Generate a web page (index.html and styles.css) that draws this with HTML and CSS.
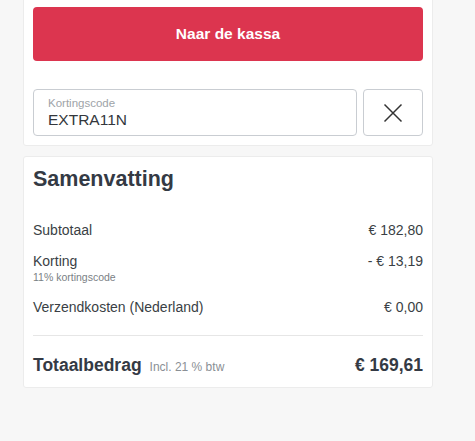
FILE: index.html
```html
<!DOCTYPE html>
<html lang="nl">
<head>
<meta charset="utf-8">
<title>Winkelwagen</title>
<link rel="stylesheet" href="styles.css">
</head>
<body>
<div class="wrap">
  <section class="card card-top">
    <button class="checkout">Naar de kassa</button>
    <div class="coupon">
      <div class="field">
        <span class="field-label">Kortingscode</span>
        <span class="field-value">EXTRA11N</span>
      </div>
      <button class="clear" aria-label="Verwijderen">
        <svg width="20" height="20" viewBox="0 0 20 20"><path d="M1.5 1.5 L18.5 18.5 M18.5 1.5 L1.5 18.5" stroke="#333" stroke-width="1.5" fill="none"/></svg>
      </button>
    </div>
  </section>
  <section class="card card-summary">
    <h2 class="title">Samenvatting</h2>
    <div class="row row-first">
      <span>Subtotaal</span>
      <span>€ 182,80</span>
    </div>
    <div class="row row-discount">
      <div>
        <div>Korting</div>
        <div class="sub">11% kortingscode</div>
      </div>
      <span>- € 13,19</span>
    </div>
    <div class="row row-ship">
      <span>Verzendkosten (Nederland)</span>
      <span>€ 0,00</span>
    </div>
    <div class="total">
      <div class="total-left">
        <span class="total-label">Totaalbedrag</span>
        <span class="vat">Incl. 21 % btw</span>
      </div>
      <span class="total-value">€ 169,61</span>
    </div>
  </section>
</div>
</body>
</html>
```
FILE: styles.css
```css
* { box-sizing: border-box; }
html, body { margin: 0; padding: 0; }
body {
  background: #f7f7f7;
  font-family: "Liberation Sans", Arial, sans-serif;
  color: #343a40;
  width: 475px;
  height: 441px;
  overflow: hidden;
}
.wrap {
  width: 410px;
  margin-left: 23px;
}
.card {
  background: #fff;
  border: 1px solid #ececec;
  border-radius: 3px;
}
.card-top {
  margin-top: -4px;
  padding: 10px 9px 9px;
}
.checkout {
  display: block;
  width: 100%;
  height: 54px;
  border: 0;
  border-radius: 4px;
  background: #dc354f;
  color: #fff;
  font-family: "Liberation Sans", Arial, sans-serif;
  font-weight: bold;
  font-size: 15.5px;
  padding: 0;
}
.coupon {
  display: flex;
  gap: 6px;
  margin-top: 28px;
}
.field {
  flex: 1;
  height: 47px;
  border: 1px solid #c9cdd2;
  border-radius: 4px;
  padding: 7px 14px 0;
  display: flex;
  flex-direction: column;
}
.field-label {
  font-size: 11.5px;
  line-height: 13px;
  color: #9ea3a8;
}
.field-value {
  font-size: 15.5px;
  line-height: 18px;
  margin-top: 1px;
  color: #33373c;
}
.clear {
  width: 60px;
  height: 47px;
  border: 1px solid #c9cdd2;
  border-radius: 4px;
  background: #fff;
  display: flex;
  align-items: center;
  justify-content: center;
  padding: 0;
}
.card-summary {
  margin-top: 10px;
  padding: 10px 9px 8px;
}
.title {
  margin: 0;
  font-size: 21.5px;
  line-height: 24px;
  font-weight: bold;
  color: #343a44;
}
.row {
  display: flex;
  justify-content: space-between;
  align-items: flex-start;
  font-size: 14px;
  line-height: 20px;
  color: #3a3f45;
}
.row-first { margin-top: 29px; }
.row-discount { margin-top: 11px; }
.row-ship { margin-top: 13px; }
.sub {
  font-size: 10.5px;
  line-height: 13px;
  color: #7a7f85;
}
.total {
  margin-top: 18px;
  border-top: 1px solid #e6e6e6;
  padding-top: 17px;
  display: flex;
  justify-content: space-between;
  align-items: baseline;
  line-height: 24px;
}
.total-left {
  display: flex;
  align-items: baseline;
}
.total-label {
  font-size: 17.5px;
  font-weight: bold;
  color: #343a44;
}
.vat {
  font-size: 12px;
  color: #8a8f95;
  margin-left: 8px;
}
.total-value {
  font-size: 17.5px;
  font-weight: bold;
  color: #343a44;
}
```
